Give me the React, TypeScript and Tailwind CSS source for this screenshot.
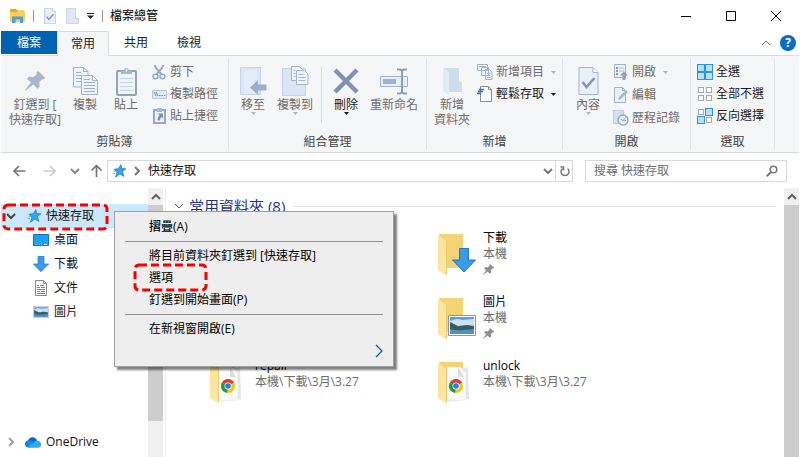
import { type ReactNode } from 'react';

type IconProps = { className?: string };

// ---------- shared small glyphs ----------

function Chevron({ d, className = '' }: { d: 'up' | 'down' | 'right'; className?: string }) {
  const paths = { up: 'M1 7 5 3l4 4', down: 'M1 3l4 4 4-4', right: 'M3 1l4 4-4 4' };
  return (
    <svg viewBox="0 0 10 10" className={`h-[10px] w-[10px] shrink-0 ${className}`} fill="none" stroke="currentColor">
      <path d={paths[d]} />
    </svg>
  );
}

function Caret({ className = 'text-[#a9a9a9]' }: IconProps) {
  return (
    <svg viewBox="0 0 5 3" className={`h-[3px] w-[5px] shrink-0 ${className}`} fill="currentColor">
      <path d="M0 0h5L2.500 3z" />
    </svg>
  );
}

function Star() {
  return (
    <svg viewBox="0 0 14 14" className="h-[14px] w-[14px] shrink-0">
      <path d="M8.800.6 9.800 4.600l4 .2-3.300 2.700 1.400 4.900-4-2.400-4.300 3.200 1.300-5L2 5.300l4.600-.7z" fill="#35a5ee" stroke="#1479c4" strokeWidth=".7" />
      <path d="M1.500 7.500h2M.5 9.500h2.500" stroke="#5aaee8" strokeWidth=".8" />
    </svg>
  );
}

function Pushpin({ className = '' }: IconProps) {
  return (
    <svg viewBox="0 0 20 20" className={className} fill="currentColor">
      <path d="M13 0 20 6.500l-.8 1.500-2.400.4-2.600 3.100.5 4-2.200 2.300-4.200-4.300-7.500 6-.6-.5 5.700-7.500L2 7.800 4 5.600l4.300.6 3.200-2.700.2-2.300z" />
    </svg>
  );
}

// ---------- title bar icons ----------

function ExplorerIcon() {
  return (
    <svg viewBox="0 0 17 14" className="h-[14px] w-[17px]">
      <path d="M1 0h6l1.500 1.500H15V4H1z" fill="#e9a61f" />
      <path d="M1 3h7l1-1h7v11H1z" fill="#ffd04f" />
      <path d="M3 14V7.500h11V14h-3v-3.500H6.500V14z" fill="#4a9fdc" />
    </svg>
  );
}

function CheckPage({ className = '' }: IconProps) {
  return (
    <svg viewBox="0 0 20 28" className={className}>
      <path d="M.5.5h14l5 5v22H.5z" fill="#e8f0fa" stroke="#a3b4cd" />
      <path d="M14.500.5v5h5" fill="#fff" stroke="#a3b4cd" />
      <path d="m4 15 4 5 8-9" fill="none" stroke="#8196ba" strokeWidth="2.500" />
    </svg>
  );
}

function BlankFolder() {
  return (
    <svg viewBox="0 0 13 16" className="h-4 w-[13px]">
      <path d="M.5.5h9v10h3v5H.5z" fill="#dfe8f4" stroke="#cdd9e9" />
      <path d="M9.500 1v9.500h3V12" fill="none" stroke="#c2cfe2" />
    </svg>
  );
}

// ---------- large ribbon icons ----------

function CopyIcon({ className = 'h-7 w-[25px]' }: IconProps) {
  return (
    <svg viewBox="0 0 25 28" className={className} stroke="#9fb2cf">
      <path d="M.5.500h10l4.500 4V20H.5z" fill="#eef4fb" />
      <path d="M10.500.500v4H15M3 5.500h5M3 8.500h6M3 11.500h6M3 14.500h5" fill="none" />
      <path d="M8.500 8.500h11l5 5v14h-16z" fill="#eef4fb" />
      <path d="M19.500 8.500v5h5M11 12.500h6M11 15.500h11M11 18.500h11M11 21.500h11M11 24.500h11" fill="none" />
    </svg>
  );
}

function PasteIcon() {
  return (
    <svg viewBox="0 0 21 29" className="h-[29px] w-[21px]">
      <rect x="1" y="4" width="19" height="24" rx="1" fill="#f0f5fb" stroke="#8fa3c3" strokeWidth="2" />
      <path d="M4 11.500h13M4 15.500h13M4 19.500h13M4 23.500h13" stroke="#c7d6ea" />
      <path d="M5 7V4h3c0-4 5-4 5 0h3v3z" fill="#a9b8cf" />
      <circle cx="10.500" cy="3.500" r="1" fill="#f5f6f7" />
    </svg>
  );
}

function MoveToIcon() {
  return (
    <svg viewBox="0 0 27 30" className="h-[30px] w-[27px]">
      <path d="M.5 1.500h20v27H.5z" fill="#dbe6f4" stroke="#c4d4e8" />
      <path d="M4 28V4h13v24" fill="#e4ecf7" />
      <path d="M10 21.500 18 14v4.500h8.500v6H18V29z" fill="#9baecb" />
    </svg>
  );
}

function CopyToIcon() {
  return (
    <svg viewBox="0 0 27 30" className="h-[30px] w-[27px]" stroke="#a3b4cd">
      <path d="M.5 2.500h23v27H.5z" fill="#dbe6f4" stroke="#c4d4e8" />
      <path d="M9.500.5h8l3 3v11h-11z" fill="#f0f5fb" />
      <path d="M14.500 4.500h8l3.500 3.500v10.500H14.500z" fill="#f0f5fb" />
      <path d="M16.500 8.500h5M16.500 11.500h7M16.500 14.500h7M11.500 4.500h2M11.500 7.500h2M11.500 10.500h2" fill="none" />
    </svg>
  );
}

function DeleteIcon() {
  return (
    <svg viewBox="0 0 26 26" className="h-[26px] w-[26px]" stroke="#7f92b5" strokeWidth="4.500">
      <path d="m2 2 22 22M24 2 2 24" />
    </svg>
  );
}

function RenameIcon() {
  return (
    <svg viewBox="0 0 28 27" className="h-[27px] w-7">
      <path d="M.5 8.500h27v10H.5z" fill="#e9f0fa" stroke="#9fb2cf" />
      <path d="M3 11h13v5H3z" fill="#9fb2cf" />
      <path d="M17 1.500h3l2 1 2-1h3M22 2.500v22M17 25.500h3l2-1 2 1h3" fill="none" stroke="#8a9dbd" strokeWidth="2" />
    </svg>
  );
}

function NewFolderIcon() {
  return (
    <svg viewBox="0 0 19 27" className="h-[27px] w-[19px]">
      <path d="M1 0h15v13l3 2v9H6z" fill="#cfdceb" />
      <path d="M0 0 6 4v23L0 23z" fill="#e3ecf6" />
    </svg>
  );
}

// ---------- small ribbon icons ----------

function CutIcon() {
  return (
    <svg viewBox="0 0 16 16" className="h-4 w-4" fill="none" stroke="#97a9c5">
      <path d="M4 1c0 3 3 5 6.500 9.500M12 1c0 3-3 5-6.500 9.500" strokeWidth="2" />
      <ellipse cx="4.500" cy="12.500" rx="2.500" ry="2.200" strokeWidth="1.500" />
      <ellipse cx="11.500" cy="12.500" rx="2.500" ry="2.200" strokeWidth="1.500" />
    </svg>
  );
}

function CopyPathIcon() {
  return (
    <svg viewBox="0 0 15 9" className="h-[9px] w-[15px]">
      <path d="M.5.5h14v8H.5z" fill="#e0eaf5" stroke="#b9c8de" />
      <path d="m2 2 2 4m0-4 2 4" stroke="#7288af" />
      <path d="M7 5.500h1.500M9.500 5.500H11M12 5.500h1.500" stroke="#7288af" />
    </svg>
  );
}

function ShortcutIcon() {
  return (
    <svg viewBox="0 0 13 16" className="h-4 w-[13px]">
      <path d="M1 2h11v13H1z" fill="#edf3fa" stroke="#97a9c5" strokeWidth="2" />
      <path d="M4 0h5v4H4z" fill="#a9b8cf" />
      <path d="M5 5.500h5v5L8.500 9C7.500 10 7 11 7 12.500H4.500C4.500 10.500 5 9 6.500 7.200z" fill="#7c90b4" />
    </svg>
  );
}

function NewItemIcon() {
  return (
    <svg viewBox="0 0 16 16" className="h-4 w-4" fill="#edf3fa" stroke="#9fb2cf">
      <path d="M.5.5h10v6H.5zM4.500 3.500h7v8h-7zM8.500 5.500h4l2.500 2.500v7.500H8.500z" />
      <path d="M10 9.500h3.500M10 11.500h3.500M10 13.500h3.500M2 2.500h7" />
    </svg>
  );
}

function EasyAccessIcon() {
  return (
    <svg viewBox="0 0 16 16" className="h-4 w-4">
      <path d="M3.500.5h8l3 3v12h-11z" fill="#fff" stroke="#8b8b8b" />
      <path d="M11.500.5v3h3" fill="none" stroke="#8b8b8b" />
      <path d="M2 3.500h5M1 5.500h5M0 7.500h4" stroke="#1976d2" strokeWidth="1.300" />
    </svg>
  );
}

function OpenIcon() {
  return (
    <svg viewBox="0 0 14 16" className="h-4 w-[14px]">
      <path d="M.5.5h11v13H.5z" fill="#edf3fa" stroke="#9fb2cf" />
      <path d="M2 3h2v2H2zM2 6h2v2H2zM2 9h2v2H2z" fill="#8a9dbd" />
      <path d="M5 4h5M5 7h5" stroke="#b1c0d8" />
      <path d="m10 7.500 4 4h-2.500V16h-3v-4.500H6z" fill="#8ca0c2" />
    </svg>
  );
}

function EditIcon() {
  return (
    <svg viewBox="0 0 14 16" className="h-4 w-[14px]">
      <path d="M.5.5h8l3 3v12H.5z" fill="#edf3fa" stroke="#9fb2cf" />
      <path d="M8.500.5v3h3" fill="none" stroke="#9fb2cf" />
      <path d="m4 13 1-3 7-7 2 2-7 7z" fill="#a9b9d1" />
    </svg>
  );
}

function HistoryIcon() {
  return (
    <svg viewBox="0 0 16 16" className="h-4 w-4">
      <path d="M.5.500h10v13h-10z" fill="#d5e1ef" stroke="#bccce1" />
      <circle cx="10" cy="10" r="5" fill="#e9f0f8" stroke="#97a9c5" strokeWidth="1.500" />
      <path d="m13 7-3 3.500L7.500 9M10 10.500h3" fill="none" stroke="#97a9c5" />
    </svg>
  );
}

// four tiles, the highlighted ones are filled blue
function TilesIcon({ on }: { on: boolean[] }) {
  const spots = [[0, 0], [8, 0], [0, 8], [8, 8]];
  return (
    <svg viewBox="0 0 16 16" className="h-4 w-4">
      {spots.map(([x, y], i) =>
        on[i] ? (
          <rect key={i} x={x + 0.5} y={y + 0.5} width="7" height="7" fill="#b9e0fb" stroke="#2b93e0" />
        ) : (
          <rect key={i} x={x + 1.5} y={y + 1.5} width="5" height="5" fill="#fff" stroke="#a8a8a8" />
        )
      )}
    </svg>
  );
}

// ---------- nav and content icons ----------

function DesktopIcon() {
  return (
    <svg viewBox="0 0 16 12" className="h-3 w-4">
      <path d="M.5.5h15v11H.5z" fill="#1aa0f4" stroke="#0a75c4" />
      <path d="M2 10.500h8" stroke="#7cc8f8" strokeDasharray="1 1" />
      <path d="M11 10.500h3" stroke="#fff" />
    </svg>
  );
}

function DownArrow({ className = '' }: IconProps) {
  return (
    <svg viewBox="0 0 24 24" className={className}>
      <path d="M7.500.5h9V12h7L12 23.500.5 12h7z" fill="#3c9be8" stroke="#1f7ac6" />
    </svg>
  );
}

function DocumentIcon() {
  return (
    <svg viewBox="0 0 12 16" className="h-4 w-3">
      <path d="M.5.5h8l3 3v12H.5z" fill="#fff" stroke="#8a8a8a" />
      <path d="M8.500.5v3h3" fill="none" stroke="#8a8a8a" />
      <path d="M2 5.500h2M5 5.500h4M2 7.500h3M6 7.500h4M2 9.500h8M2 11.500h3M6 11.500h4M2 13.500h8" stroke="#4594d2" />
    </svg>
  );
}

function PictureIcon({ className = '' }: IconProps) {
  return (
    <svg viewBox="0 0 28 21" preserveAspectRatio="none" className={className}>
      <path d="M.5.5h27v20H.5z" fill="#fff" stroke="#8e959c" />
      <path d="M2 2h24v17H2z" fill="#5b9fe6" />
      <path d="M2 6c5-2 8-3 12-1l12-1v10H2z" fill="#c9e2f5" />
      <path d="M2 7c3 1 5 3 8 4 4 0 6-1 9-1 3 0 5 1 7 1v5c-9 1-16 1-24 0z" fill="#3c5d58" />
      <path d="M2 14c8 2 16 1 24 0v5H2z" fill="#4c90c4" />
    </svg>
  );
}

function CloudIcon() {
  return (
    <svg viewBox="0 0 16 11" className="h-[11px] w-4">
      <path d="M4 10.500a4 4 0 0 1-1-7C5-.5 10-1 12 3.500z" fill="#0d64bf" />
      <path d="M3 3.500c3-1 5 1 6 3l-5 4a3.500 3.500 0 0 1-1-7z" fill="#1687dc" />
      <path d="M4 10.800c-1-3 2-5 4-4.200 1-3 4-4 5.500-2.500C17 5 17 10.800 13 10.800z" fill="#29a9ee" />
    </svg>
  );
}

function ChromeLogo() {
  return (
    <g>
      <circle cx="18" cy="24" r="7" fill="#fbc116" />
      <path d="M18 24 12 20.400A7 7 0 0 1 24 20.400z" fill="#e33b2e" />
      <path d="m18 24-1 6.900a7 7 0 0 1-5-10.500z" fill="#229a4b" />
      <circle cx="18" cy="24" r="3.500" fill="#fff" />
      <circle cx="18" cy="24" r="2.800" fill="#2a7de1" />
    </g>
  );
}

function Folder({ kind }: { kind: 'download' | 'picture' | 'chrome' }) {
  return (
    <svg viewBox="0 0 38 42" className="h-[42px] w-[38px] shrink-0">
      <path d="M1 0h24v34H8z" fill="#f5d272" />
      {kind === 'chrome' && (
        <>
          <path d="M12 9l18-4 1 32-21 3z" fill="#e6e6e6" />
          <path d="M9 5h13l6 6v27l-19 1z" fill="#fbfbfb" stroke="#e2e2e2" strokeWidth=".5" />
          <path d="M20 5v10h6z" fill="#dcdcdc" />
          <ChromeLogo />
        </>
      )}
      <path d="M0 1 8 7v34l-8-5z" fill="#fde4a0" />
      <path d="M8 7v34l1-1V8z" fill="#f1cd6a" />
      {kind === 'download' && (
        <path d="M21.500 14.500h9V26h7L26 38 14.500 26h7z" fill="#3c9be8" stroke="#1f7ac6" />
      )}
      {kind === 'picture' && (
        <svg x="10" y="17" width="28" height="21">
          <PictureIcon />
        </svg>
      )}
    </svg>
  );
}

// ---------- ribbon ----------

type BigButtonProps = { icon: ReactNode; label: string; caret?: boolean; active?: boolean; className: string };

function BigButton({ icon, label, caret, active, className }: BigButtonProps) {
  return (
    <button type="button" className={`flex flex-col items-center leading-[15px] ${active ? 'text-[#1a1a1a]' : 'text-[#6d6d6d]'} ${className}`}>
      <span className="flex h-9 items-center justify-center pt-1">{icon}</span>
      <span className="whitespace-pre">{label}</span>
      {caret && <Caret className={active ? 'text-[#1a1a1a]' : 'text-[#b4b4b4]'} />}
    </button>
  );
}

type SmallButtonProps = { icon: ReactNode; label: string; caret?: boolean; active?: boolean };

function SmallButton({ icon, label, caret, active }: SmallButtonProps) {
  return (
    <button type="button" className={`flex h-[22px] items-center gap-[3px] whitespace-nowrap ${active ? 'text-[#1a1a1a]' : 'text-[#6d6d6d]'}`}>
      <span className="flex w-4 justify-center">{icon}</span>
      {label}
      {caret && <span className="pl-1"><Caret className={active ? 'text-[#1a1a1a]' : 'text-[#b4b4b4]'} /></span>}
    </button>
  );
}

function Group({ title, className, children }: { title: string; className: string; children: ReactNode }) {
  return (
    <section className={`flex shrink-0 flex-col border-r border-[#dfe1e4] ${className}`}>
      <div className="flex flex-1 items-start pt-[3px]">{children}</div>
      <h2 className="pb-px text-center leading-[15px] text-[#444]">{title}</h2>
    </section>
  );
}

function Ribbon() {
  return (
    <div className="flex h-[98px] border-y border-[#d9dbde] bg-[#f5f6f7] py-[2px]">
      <Group title="剪貼簿" className="w-[228px]">
        <BigButton className="w-[68px]" icon={<Pushpin className="h-5 w-5 text-[#a9b7cb]" />} label={'釘選到 [\n快速存取]'} />
        <BigButton className="w-8" icon={<CopyIcon />} label="複製" />
        <BigButton className="w-[50px]" icon={<PasteIcon />} label="貼上" />
        <div>
          <SmallButton icon={<CutIcon />} label="剪下" />
          <SmallButton icon={<CopyPathIcon />} label="複製路徑" />
          <SmallButton icon={<ShortcutIcon />} label="貼上捷徑" />
        </div>
      </Group>
      <Group title="組合管理" className="w-[198px]">
        <BigButton className="w-12" icon={<MoveToIcon />} label="移至" caret />
        <BigButton className="w-9" icon={<CopyToIcon />} label="複製到" caret />
        <div className="ml-2 mt-[6px] h-14 w-px bg-[#dcdee1]" />
        <BigButton className="w-12" icon={<DeleteIcon />} label="刪除" caret active />
        <BigButton className="w-12" icon={<RenameIcon />} label="重新命名" />
      </Group>
      <Group title="新增" className="w-[136px]">
        <BigButton className="w-[50px]" icon={<NewFolderIcon />} label={'新增\n資料夾'} />
        <div>
          <SmallButton icon={<NewItemIcon />} label="新增項目" caret />
          <SmallButton icon={<EasyAccessIcon />} label="輕鬆存取" caret active />
        </div>
      </Group>
      <Group title="開啟" className="w-32">
        <BigButton className="w-[50px]" icon={<CheckPage className="h-7 w-[21px]" />} label="內容" caret />
        <div className="flex flex-col gap-px">
          <SmallButton icon={<OpenIcon />} label="開啟" caret />
          <SmallButton icon={<EditIcon />} label="編輯" />
          <SmallButton icon={<HistoryIcon />} label="歷程記錄" />
        </div>
      </Group>
      <Group title="選取" className="w-[84px]">
        <div className="pl-[6px]">
          <SmallButton icon={<TilesIcon on={[true, true, true, true]} />} label="全選" active />
          <SmallButton icon={<TilesIcon on={[false, false, false, false]} />} label="全部不選" active />
          <SmallButton icon={<TilesIcon on={[false, true, true, false]} />} label="反向選擇" active />
        </div>
      </Group>
    </div>
  );
}

// ---------- window chrome ----------

function TitleBar() {
  return (
    <header className="flex h-[31px] items-center pl-2">
      <ExplorerIcon />
      <span className="ml-[7px] h-3 w-px bg-[#999]" />
      <button type="button" aria-label="內容" className="ml-[10px]"><CheckPage className="h-4 w-3" /></button>
      <button type="button" aria-label="新增資料夾" className="ml-[10px]"><BlankFolder /></button>
      <button type="button" aria-label="自訂" className="ml-2">
        <svg viewBox="0 0 7 6" className="h-[6px] w-[7px]">
          <path d="M0 .5h7" stroke="#222" />
          <path d="M0 2.500h7L3.500 6z" fill="#222" />
        </svg>
      </button>
      <span className="ml-2 h-3 w-px bg-[#999]" />
      <h1 className="ml-[7px] text-black">檔案總管</h1>
      <div className="ml-auto flex items-center gap-[35px] pr-[18px]">
        <button type="button" aria-label="最小化"><svg viewBox="0 0 10 10" className="h-[10px] w-[10px]" stroke="#000"><path d="M0 5.500h10" /></svg></button>
        <button type="button" aria-label="最大化"><svg viewBox="0 0 10 10" className="h-[10px] w-[10px]" stroke="#000" fill="none"><path d="M.5.5h9v9h-9z" /></svg></button>
        <button type="button" aria-label="關閉"><svg viewBox="0 0 10 10" className="h-[10px] w-[10px]" stroke="#000"><path d="m0 0 10 10M10 0 0 10" /></svg></button>
      </div>
    </header>
  );
}

function Tabs() {
  return (
    <nav className="flex h-6 items-stretch text-[#222]">
      <button type="button" className="mb-px w-14 bg-[#0063b1] text-white">檔案</button>
      <button type="button" className="relative -mb-px w-[52px] border border-b-0 border-[#d9dbde] bg-[#f5f6f7]">常用</button>
      <button type="button" className="w-[54px]">共用</button>
      <button type="button" className="w-[52px]">檢視</button>
      <div className="ml-auto flex items-center gap-[9px] pr-[3px]">
        <Chevron d="up" className="text-[#777]" />
        <button type="button" aria-label="說明" className="h-4 w-4 rounded-full bg-[#0a6cc4] text-[12px] font-bold leading-4 text-white">?</button>
      </div>
    </nav>
  );
}

function Arrow({ turn = '', color }: { turn?: string; color: string }) {
  return (
    <svg viewBox="0 0 13 12" className={`h-3 w-[13px] ${turn} ${color}`} fill="none" stroke="currentColor" strokeWidth="1.700">
      <path d="M12.500 6H1.500M6 1 1 6l5 5" />
    </svg>
  );
}

function AddressBar() {
  return (
    <div className="flex h-[35px] items-center pr-[12px]">
      <div className="flex w-[106px] shrink-0 items-center pl-3">
        <button type="button" aria-label="上一頁"><Arrow color="text-[#777]" /></button>
        <button type="button" aria-label="下一頁" className="ml-[17px]"><Arrow turn="rotate-180" color="text-[#ccc]" /></button>
        <button type="button" aria-label="最近" className="ml-[14px]"><Chevron d="down" className="h-[7px] w-[7px] stroke-2 text-[#8a8a8a]" /></button>
        <button type="button" aria-label="上一層" className="ml-[10px]"><Arrow turn="rotate-90" color="text-[#777]" /></button>
      </div>
      <div className="flex h-[22px] min-w-0 flex-1 items-center border border-[#d9d9d9] pl-1">
        <Star />
        <Chevron d="right" className="ml-[6px] h-2 w-2 stroke-2 text-[#777]" />
        <span className="ml-[6px] text-[#111]">快速存取</span>
        <button type="button" aria-label="歷程記錄" className="ml-auto mr-[2px]"><Chevron d="down" className="stroke-2 text-[#777]" /></button>
        <button type="button" aria-label="重新整理" className="flex h-5 w-[17px] items-center justify-center border-l border-[#d9d9d9]">
          <svg viewBox="0 0 11 12" className="h-3 w-[11px]" fill="none" stroke="#777" strokeWidth="1.500">
            <path d="M8.500 3.500a4 4 0 1 1-5 0M1.500 2h3v3.500" />
          </svg>
        </button>
      </div>
      <label className="ml-3 flex h-[22px] w-[202px] shrink items-center border border-[#d9d9d9] pl-2 pr-2">
        <input type="text" aria-label="搜尋" placeholder="搜尋 快速存取" className="min-w-0 flex-1 bg-transparent outline-none placeholder:text-[#6d6d6d]" />
        <svg viewBox="0 0 12 12" className="h-3 w-3" fill="none" stroke="#777" strokeWidth="1.500">
          <circle cx="7.500" cy="4.500" r="3.300" />
          <path d="M5 7 .8 11.200" strokeWidth="2" />
        </svg>
      </label>
    </div>
  );
}

// ---------- body ----------

function ScrollBar({ thumb }: { thumb: string }) {
  return (
    <div className="flex w-[15px] shrink-0 flex-col bg-[#f0f0f0]">
      <div className="flex h-[17px] shrink-0 items-center justify-center"><Chevron d="up" className="h-[9px] w-[9px] stroke-2 text-[#606060]" /></div>
      <div className={`bg-[#cdcdcd] ${thumb}`} />
    </div>
  );
}

const places = [
  { name: '桌面', icon: <DesktopIcon /> },
  { name: '下載', icon: <DownArrow className="h-4 w-4" /> },
  { name: '文件', icon: <DocumentIcon /> },
  { name: '圖片', icon: <PictureIcon className="h-3 w-4" /> },
];

function SideNav() {
  return (
    <nav className="w-[147px] shrink-0 pt-4 text-[#111]">
      <button type="button" className="flex h-6 w-full items-center bg-[#cce8ff] pl-[5px]">
        <Chevron d="down" className="stroke-2 text-[#444]" />
        <span className="ml-[11px]"><Star /></span>
        <span className="ml-[5px]">快速存取</span>
      </button>
      <ul>
        {places.map((p) => (
          <li key={p.name}>
            <button type="button" className="flex h-6 w-full items-center gap-[5px] pl-8">
              <span className="flex w-4 justify-center">{p.icon}</span>
              {p.name}
            </button>
          </li>
        ))}
      </ul>
      <button type="button" className="mt-[106px] flex h-6 w-full items-center pl-[5px]">
        <Chevron d="right" className="stroke-2 text-[#a0a0a0]" />
        <span className="ml-[9px]"><CloudIcon /></span>
        <span className="ml-[5px]">OneDrive</span>
      </button>
    </nav>
  );
}

type FolderItem = { name: string; path: string; kind: 'download' | 'picture' | 'chrome'; pinned?: boolean; cell: string };

const folders: FolderItem[] = [
  { name: '下載', path: '本機', kind: 'download', pinned: true, cell: 'col-start-2 row-start-1' },
  { name: '圖片', path: '本機', kind: 'picture', pinned: true, cell: 'col-start-2 row-start-2' },
  { name: 'repair', path: '本機\\下載\\3月\\3.27', kind: 'chrome', cell: 'col-start-1 row-start-3' },
  { name: 'unlock', path: '本機\\下載\\3月\\3.27', kind: 'chrome', cell: 'col-start-2 row-start-3' },
];

function Content() {
  return (
    <main className="min-w-0 flex-1 pt-2">
      <div className="flex h-5 items-center pl-2 pr-2">
        <Chevron d="down" className="h-3 w-3 text-[#555]" />
        <h2 className="ml-[5px] text-[15px] leading-5 text-[#1e3287]">常用資料夾 (8)</h2>
        <span className="ml-2 h-px flex-1 bg-[#e2e2e2]" />
      </div>
      <ul className="grid grid-cols-[228px_228px] grid-rows-[64px_64px_64px] pl-11 pt-[14px]">
        {folders.map((f) => (
          <li key={f.name} className={`flex gap-[7px] ${f.cell}`}>
            <span className="pt-1"><Folder kind={f.kind} /></span>
            <div className="leading-4">
              <p className="text-black">{f.name}</p>
              <p className="text-[#6d6d6d]">{f.path}</p>
              {f.pinned && <Pushpin className="mt-[2px] h-[11px] w-[11px] text-[#8a8f96]" />}
            </div>
          </li>
        ))}
      </ul>
    </main>
  );
}

function ContextMenu() {
  const item = 'flex h-[22px] w-full items-center pl-[34px] text-left';
  const line = <hr className="mx-[10px] my-[3px] h-px border-0 bg-[#919191]" />;
  return (
    <div className="absolute left-[114px] top-[211px] w-[280px] border border-[#a0a0a0] bg-[#eee] py-1 text-black shadow-[3px_3px_2px_rgba(0,0,0,0.5)]">
      <button type="button" className={`${item} font-medium`}>摺疊(A)</button>
      {line}
      <button type="button" className={item}>將目前資料夾釘選到 [快速存取]</button>
      <button type="button" className={item}>選項</button>
      <button type="button" className={item}>釘選到開始畫面(P)</button>
      {line}
      <button type="button" className={item}>在新視窗開啟(E)</button>
      <div className="flex h-[22px] items-center justify-end pr-[10px]">
        <svg viewBox="0 0 8 14" className="h-[14px] w-2" fill="none" stroke="#1c5f94" strokeWidth="1.300">
          <path d="m1 1 6 6-6 6" />
        </svg>
      </div>
    </div>
  );
}

// red dashed marker drawn over the window
function Marker({ className }: IconProps) {
  return (
    <svg className={`pointer-events-none absolute overflow-visible ${className}`} fill="none">
      <rect width="100%" height="100%" rx="4" stroke="#f80000" strokeWidth="3" strokeDasharray="8 4" />
    </svg>
  );
}

export default function App() {
  return (
    <div className="relative flex h-screen flex-col overflow-hidden bg-white px-px font-['Open_Sans','Noto_Sans_CJK_TC',sans-serif] text-[12px] leading-4">
      <TitleBar />
      <Tabs />
      <Ribbon />
      <AddressBar />
      <div className="flex min-h-0 flex-1 overflow-hidden">
        <SideNav />
        <ScrollBar thumb="h-[216px]" />
        <div className="ml-[2px] w-px bg-[#efefef]" />
        <Content />
        <ScrollBar thumb="flex-1" />
      </div>
      <ContextMenu />
      <Marker className="left-[4px] top-[205px] h-6 w-[103px]" />
      <Marker className="left-[135px] top-[265px] h-[25px] w-[71px]" />
    </div>
  );
}
